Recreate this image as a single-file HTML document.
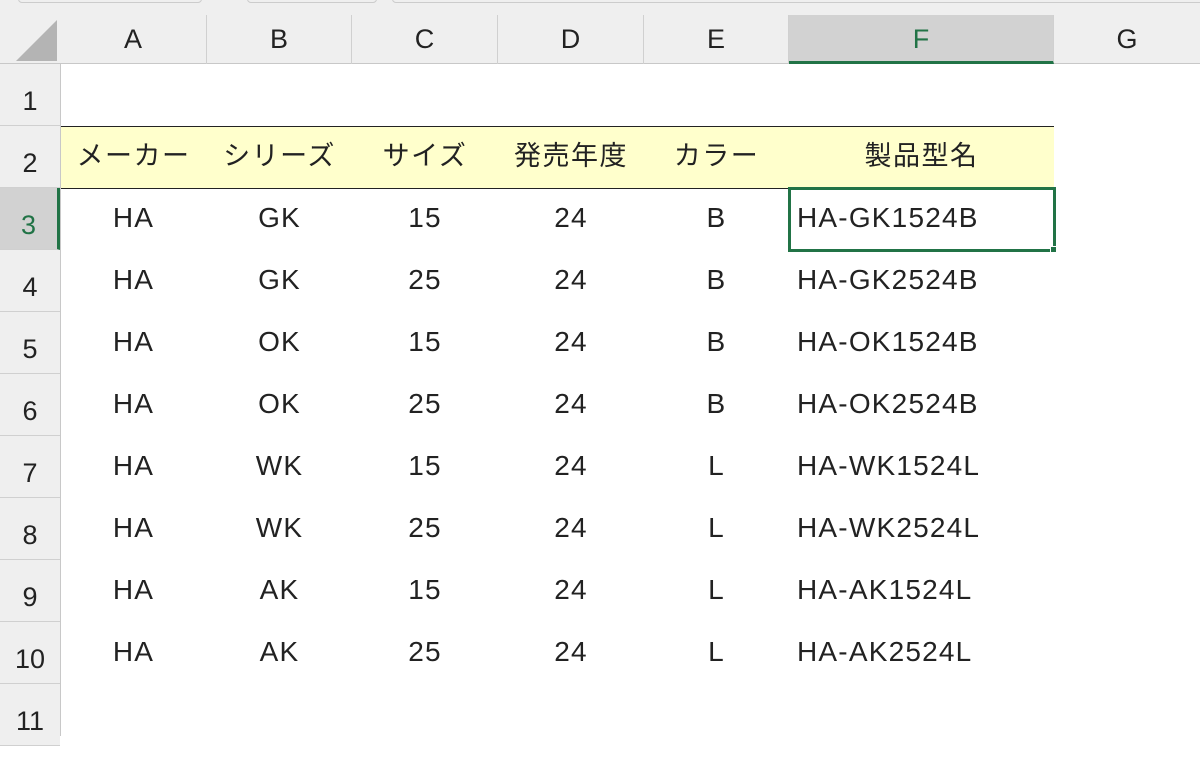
<!DOCTYPE html>
<html><head><meta charset="utf-8"><style>
*{margin:0;padding:0;box-sizing:border-box}
body{width:1200px;height:736px;overflow:hidden;background:#fff;position:relative;font-family:"Liberation Sans","Noto Sans CJK JP",sans-serif;color:#222}
.a{position:absolute}
.ch{position:absolute;top:15px;height:49px;border-right:1px solid #d0d0d0;text-align:center;font-size:27px;line-height:48px;color:#222}
.rh{position:absolute;left:0;width:60px;border-bottom:1px solid #d0d0d0;text-align:center;font-size:27px;color:#222;background:#efefef}
.c{position:absolute;font-size:28px;letter-spacing:1.2px;text-align:center;height:62px;line-height:60px;white-space:nowrap}
.j{font-size:27px;letter-spacing:1.5px}
</style></head><body>
<div class="a" style="left:0;top:0;width:1200px;height:64px;background:#efefef;border-bottom:1px solid #c8c8c8"></div>
<div class="a" style="left:18px;top:-6px;width:184px;height:9px;border:1px solid #ccc;border-radius:4px"></div>
<div class="a" style="left:247px;top:-6px;width:130px;height:9px;border:1px solid #ccc;border-radius:4px"></div>
<div class="a" style="left:392px;top:-6px;width:820px;height:9px;border:1px solid #ccc;border-radius:4px"></div>
<svg class="a" style="left:14px;top:18px" width="44" height="44"><polygon points="43,2 43,43 2,43" fill="#b4b4b4"/></svg>
<div class="a" style="left:0;top:64px;width:61px;height:672px;background:#efefef;border-right:1px solid #c8c8c8"></div>
<div class="ch" style="left:60px;width:147px">A</div>
<div class="ch" style="left:207px;width:145px">B</div>
<div class="ch" style="left:352px;width:146px">C</div>
<div class="ch" style="left:498px;width:146px">D</div>
<div class="ch" style="left:644px;width:145px">E</div>
<div class="ch" style="left:789px;width:265px;background:#d2d2d2;border-bottom:3px solid #217346;color:#217346">F</div>
<div class="ch" style="left:1054px;width:146px;border-right:none">G</div>

<div class="rh" style="top:64px;height:62px;line-height:74px">1</div>
<div class="rh" style="top:126px;height:62px;line-height:74px">2</div>
<div class="rh" style="top:188px;height:62px;line-height:74px;background:#d2d2d2;color:#217346;border-right:3px solid #217346">3</div>
<div class="rh" style="top:250px;height:62px;line-height:74px">4</div>
<div class="rh" style="top:312px;height:62px;line-height:74px">5</div>
<div class="rh" style="top:374px;height:62px;line-height:74px">6</div>
<div class="rh" style="top:436px;height:62px;line-height:74px">7</div>
<div class="rh" style="top:498px;height:62px;line-height:74px">8</div>
<div class="rh" style="top:560px;height:62px;line-height:74px">9</div>
<div class="rh" style="top:622px;height:62px;line-height:74px">10</div>
<div class="rh" style="top:684px;height:62px;line-height:74px">11</div>

<div class="a" style="left:61px;top:126px;width:993px;height:63px;background:#ffffcc;border-top:1px solid #222;border-bottom:1px solid #222"></div>
<div class="c j" style="left:60px;top:126px;width:147px">メーカー</div>
<div class="c j" style="left:207px;top:126px;width:145px">シリーズ</div>
<div class="c j" style="left:352px;top:126px;width:146px">サイズ</div>
<div class="c j" style="left:498px;top:126px;width:146px">発売年度</div>
<div class="c j" style="left:644px;top:126px;width:145px">カラー</div>
<div class="c j" style="left:789px;top:126px;width:265px">製品型名</div>

<div class="a" style="left:788px;top:187px;width:268px;height:65px;border:3px solid #217346"></div>
<div class="a" style="left:1050px;top:246px;width:7px;height:7px;background:#217346;border:1px solid #fff"></div>

<div class="c" style="left:60px;top:188px;width:147px">HA</div><div class="c" style="left:207px;top:188px;width:145px">GK</div><div class="c" style="left:352px;top:188px;width:146px">15</div><div class="c" style="left:498px;top:188px;width:146px">24</div><div class="c" style="left:644px;top:188px;width:145px">B</div><div class="c" style="left:797px;top:188px;text-align:left">HA-GK1524B</div>
<div class="c" style="left:60px;top:250px;width:147px">HA</div><div class="c" style="left:207px;top:250px;width:145px">GK</div><div class="c" style="left:352px;top:250px;width:146px">25</div><div class="c" style="left:498px;top:250px;width:146px">24</div><div class="c" style="left:644px;top:250px;width:145px">B</div><div class="c" style="left:797px;top:250px;text-align:left">HA-GK2524B</div>
<div class="c" style="left:60px;top:312px;width:147px">HA</div><div class="c" style="left:207px;top:312px;width:145px">OK</div><div class="c" style="left:352px;top:312px;width:146px">15</div><div class="c" style="left:498px;top:312px;width:146px">24</div><div class="c" style="left:644px;top:312px;width:145px">B</div><div class="c" style="left:797px;top:312px;text-align:left">HA-OK1524B</div>
<div class="c" style="left:60px;top:374px;width:147px">HA</div><div class="c" style="left:207px;top:374px;width:145px">OK</div><div class="c" style="left:352px;top:374px;width:146px">25</div><div class="c" style="left:498px;top:374px;width:146px">24</div><div class="c" style="left:644px;top:374px;width:145px">B</div><div class="c" style="left:797px;top:374px;text-align:left">HA-OK2524B</div>
<div class="c" style="left:60px;top:436px;width:147px">HA</div><div class="c" style="left:207px;top:436px;width:145px">WK</div><div class="c" style="left:352px;top:436px;width:146px">15</div><div class="c" style="left:498px;top:436px;width:146px">24</div><div class="c" style="left:644px;top:436px;width:145px">L</div><div class="c" style="left:797px;top:436px;text-align:left">HA-WK1524L</div>
<div class="c" style="left:60px;top:498px;width:147px">HA</div><div class="c" style="left:207px;top:498px;width:145px">WK</div><div class="c" style="left:352px;top:498px;width:146px">25</div><div class="c" style="left:498px;top:498px;width:146px">24</div><div class="c" style="left:644px;top:498px;width:145px">L</div><div class="c" style="left:797px;top:498px;text-align:left">HA-WK2524L</div>
<div class="c" style="left:60px;top:560px;width:147px">HA</div><div class="c" style="left:207px;top:560px;width:145px">AK</div><div class="c" style="left:352px;top:560px;width:146px">15</div><div class="c" style="left:498px;top:560px;width:146px">24</div><div class="c" style="left:644px;top:560px;width:145px">L</div><div class="c" style="left:797px;top:560px;text-align:left">HA-AK1524L</div>
<div class="c" style="left:60px;top:622px;width:147px">HA</div><div class="c" style="left:207px;top:622px;width:145px">AK</div><div class="c" style="left:352px;top:622px;width:146px">25</div><div class="c" style="left:498px;top:622px;width:146px">24</div><div class="c" style="left:644px;top:622px;width:145px">L</div><div class="c" style="left:797px;top:622px;text-align:left">HA-AK2524L</div>
</body></html>
